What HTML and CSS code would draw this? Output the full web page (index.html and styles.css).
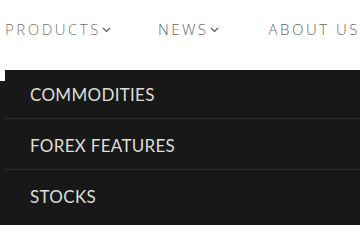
FILE: index.html
```html
<!DOCTYPE html>
<html lang="en">

<head>
  <meta charset="UTF-8">
  <meta name="viewport" content="width=device-width, initial-scale=1.0">
  <title>Menu</title>
  <link rel="stylesheet" href="styles.css">
</head>

<body>

  <!-- Top navigation -->
  <nav class="nav">
    <a href="#" class="nav-link nav-products">PRODUCTS
      <svg class="chevron" width="9" height="6" viewBox="0 0 9 6"><path d="M1 1l3.5 3.5L8 1" fill="none" stroke="#555" stroke-width="1.2"/></svg>
    </a>
    <a href="#" class="nav-link nav-news">NEWS
      <svg class="chevron" width="9" height="6" viewBox="0 0 9 6"><path d="M1 1l3.5 3.5L8 1" fill="none" stroke="#555" stroke-width="1.2"/></svg>
    </a>
    <a href="#" class="nav-link nav-about">ABOUT US</a>
  </nav>

  <!-- Products dropdown -->
  <div class="dropdown">
    <div class="dropdown-cap"></div>
    <ul class="dropdown-list">
      <li><a href="#">COMMODITIES</a></li>
      <li><a href="#">FOREX FEATURES</a></li>
      <li><a href="#">STOCKS</a></li>
    </ul>
  </div>

</body>

</html>
```

FILE: styles.css
```css
body {
  margin: 0;
  padding: 0;
  background: #fff;
  font-family: "Open Sans", sans-serif;
  overflow: hidden;
}

.nav {
  display: flex;
  align-items: center;
  height: 70px;
  padding-left: 5px;
  box-sizing: border-box;
  padding-bottom: 12px;
}

.nav-link {
  display: flex;
  align-items: center;
  color: #666;
  font-size: 15px;
  font-weight: 300;
  letter-spacing: 2.5px;
  text-decoration: none;
  white-space: nowrap;
}

.nav-products {
  color: #7a7565;
}

.chevron {
  margin-left: 1px;
  margin-top: 2px;
}

.nav-news {
  margin-left: 47px;
}

.nav-about {
  margin-left: 50px;
}

.dropdown {
  width: 360px;
}

.dropdown-cap {
  height: 11px;
  margin-left: 5px;
  background: #181818;
}

.dropdown-list {
  list-style: none;
  margin: 0;
  padding: 0 0 10px 0;
  background: #181818;
}

.dropdown-list li {
  margin-left: 4px;
  border-bottom: 1px solid #2c2c2c;
}

.dropdown-list li:last-child {
  border-bottom: none;
}

.dropdown-list a {
  display: flex;
  align-items: center;
  box-sizing: border-box;
  height: 50px;
  padding-left: 26px;
  padding-top: 3px;
  color: #deded6;
  font-family: "Lato", sans-serif;
  font-size: 17px;
  letter-spacing: 0.3px;
  text-decoration: none;
}

.dropdown-list li:first-child a {
  height: 37px;
  padding-top: 0;
  padding-bottom: 10px;
}
```
